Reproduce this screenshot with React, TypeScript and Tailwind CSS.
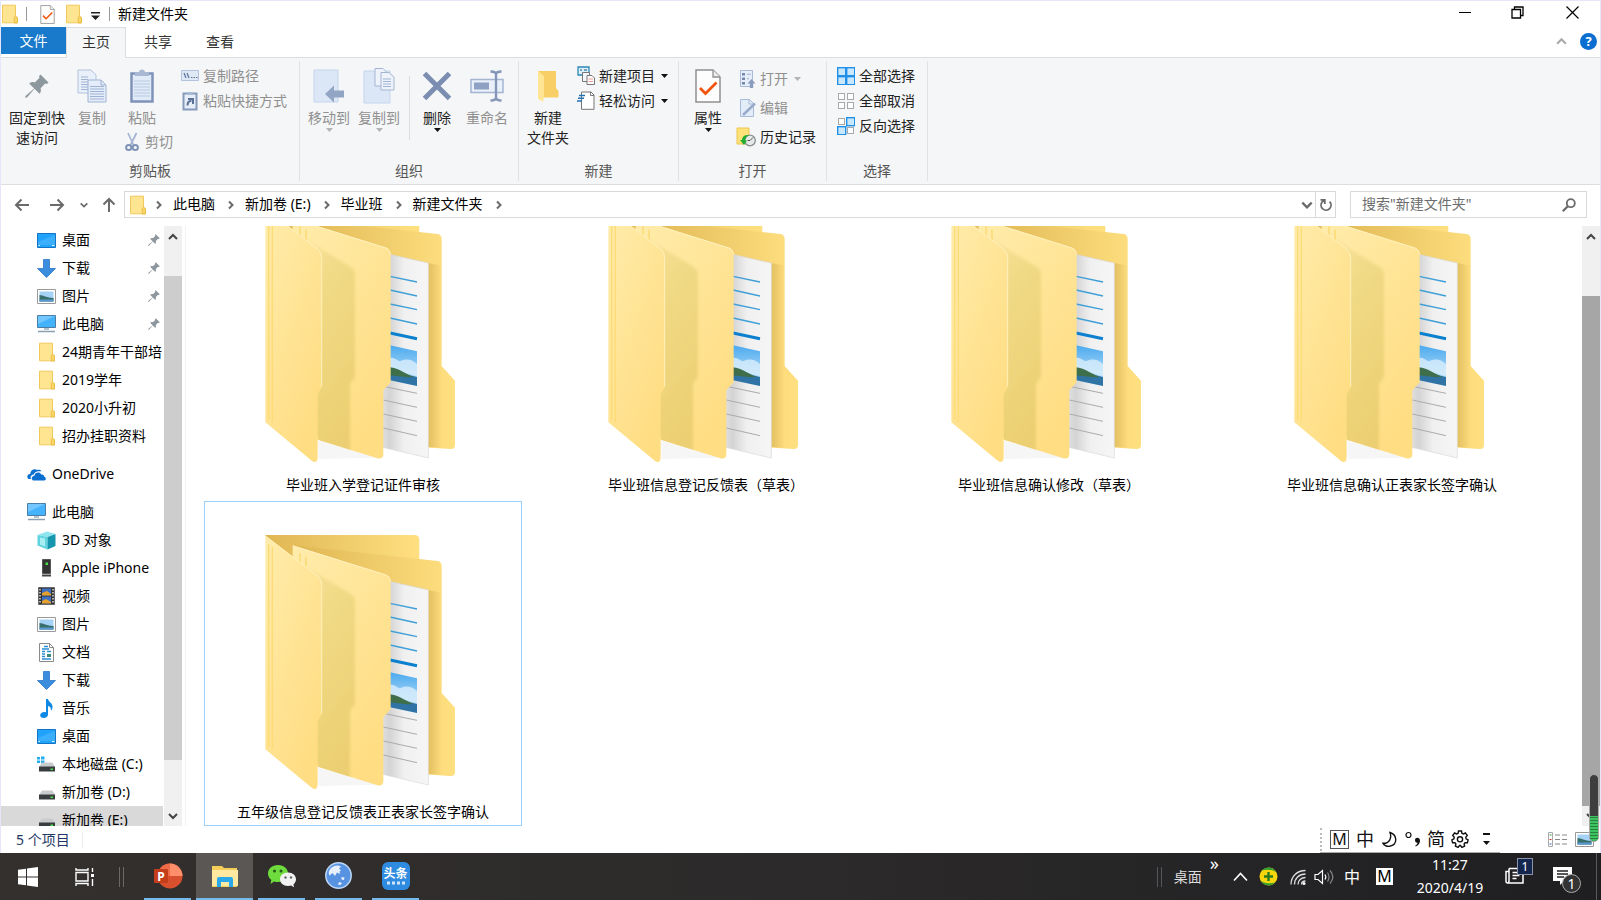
import React from 'react';

type IconProps = { className?: string };

/* ---------- shared icons ---------- */

const SmallFolder: React.FC<IconProps> = ({ className = 'w-4 h-5' }) => (
  <svg className={`shrink-0 ${className}`} viewBox="0 0 16 20">
    <path d="M.5 1.2h13v11.3l2 1.2v5.1H.5z" fill="#ffe592" stroke="#f0c95c" />
    <path d="M12.2 19v-5.6l1.3-1.2 2 1.5V19z" fill="#fbd667" stroke="#e9bd4b" />
  </svg>
);

const Pin: React.FC<IconProps> = ({ className = 'w-3 h-3' }) => (
  <svg className={`shrink-0 ${className}`} viewBox="0 0 24 24" fill="#8d979e">
    <path d="M15.5.5 23.5 8.5 21.8 10l-1.6-.5-4.6 4.7c.7 2 .3 4-1 5.6L9.5 14.8 2 23.5.3 23.7.5 22l8.7-7.5L4.2 9.4c1.600-1.300 3.600-1.700 5.600-1L14.500 3.800 14 2.200z" />
  </svg>
);

const Caret: React.FC<{ dim?: boolean }> = ({ dim }) => (
  <svg className="w-[7px] h-1 shrink-0" viewBox="0 0 7 4">
    <path d="M0 0h7L3.500 4z" fill={dim ? '#b4b4b4' : '#111'} />
  </svg>
);

const Chevron: React.FC<{ dir: 'up' | 'down' | 'right'; className?: string }> = ({ dir, className = 'w-3 h-3' }) => {
  const d = { up: 'M2 8l4-4 4 4', down: 'M2 4l4 4 4-4', right: 'M4 2.500L7.500 6 4 9.500' }[dir];
  return (
    <svg className={`shrink-0 ${className}`} viewBox="0 0 12 12" fill="none" stroke="currentColor" strokeWidth="2">
      <path d={d} />
    </svg>
  );
};

const CheckDoc: React.FC<IconProps> = ({ className = '' }) => (
  <svg className={`shrink-0 ${className}`} viewBox="0 0 26 34">
    <path d="M1 1h17l7 7v25H1z" fill="#fdfdfd" stroke="#909090" strokeWidth="1.500" />
    <path d="M18 1v7h7" fill="#eee" stroke="#909090" strokeWidth="1.300" />
    <path d="M5 19l5.500 5.500L21.500 13.500" fill="none" stroke="#f2540f" strokeWidth="2.800" />
  </svg>
);

/* ---------- ribbon icons ---------- */

const sheetLines = (x: number, y: number, w: number, n: number) =>
  Array.from({ length: n }, (_, i) => <path key={`${x}-${i}`} d={`M${x} ${y + i * 2.500}h${w}`} stroke="#9fb3d4" />);

const CopyIcon = () => (
  <svg className="w-[30px] h-[34px]" viewBox="0 0 30 34">
    <path d="M1 1h13l5 5v18H1z" fill="#e9f0fa" stroke="#b3c3de" />
    {sheetLines(4, 8, 7, 6)}
    <path d="M11 11h13l5 5v17H11z" fill="#e4edf9" stroke="#9fb3d4" />
    <path d="M24 11v5h5" fill="none" stroke="#9fb3d4" />
    {sheetLines(13, 17.500, 14, 6)}
  </svg>
);

const PasteIcon = () => (
  <svg className="w-6 h-[34px]" viewBox="0 0 24 34">
    <path d="M1.500 4.500h21v28h-21z" fill="#e1ebf8" stroke="#7f93b8" strokeWidth="2.500" />
    <path d="M5 3h4c0-3.500 6-3.500 6 0h4v4H5z" fill="#a9b9d4" />
    {[12, 15, 18, 21, 24, 27].map((y) => <path key={y} d={`M4 ${y}h16`} stroke="#b9c9e2" />)}
  </svg>
);

const CutIcon = () => (
  <svg className="w-[14px] h-5" viewBox="0 0 14 20" fill="none" stroke="#7f93b8">
    <path d="M3 1l5.500 12M11.500 1L5.500 13" stroke="#a4b4d0" strokeWidth="1.700" />
    <circle cx="3.700" cy="15.500" r="2.600" strokeWidth="2" />
    <circle cx="10.300" cy="15.500" r="2.600" strokeWidth="2" />
  </svg>
);

const CopyPathIcon = () => (
  <svg className="w-[18px] h-[11px]" viewBox="0 0 18 11">
    <path d="M.5.5h17v10H.5z" fill="#dfe9f6" stroke="#b3c3de" />
    <path d="M3 3l2 5M6 3l2 5M10 7.500h1.500M12.500 7.500H14M15 7.500h1.500" stroke="#5c7196" strokeWidth="1.200" />
  </svg>
);

const PasteLinkIcon = () => (
  <svg className="w-[18px] h-5" viewBox="0 0 18 20">
    <path d="M2.500 2.500h13v16h-13z" fill="#e6eef9" stroke="#8699bb" strokeWidth="2" />
    <path d="M6 1h6v3H6z" fill="#a9b9d4" />
    <path d="M6.500 14.500c0-3 1.500-4.500 4-4.700M7 8h5v5" fill="none" stroke="#5c7196" strokeWidth="2" />
  </svg>
);

const MoveToIcon = () => (
  <svg className="w-8 h-9" viewBox="0 0 32 36">
    <path d="M1 2h24v32H1z" fill="#dbe6f6" stroke="#c6d5ec" />
    <path d="M12 26l9-8.500v5h10v7H21v5z" fill="#93a5c4" />
  </svg>
);

const CopyToIcon = () => (
  <svg className="w-8 h-9" viewBox="0 0 32 36">
    <path d="M1 3h26v32H1z" fill="#dbe6f6" stroke="#c6d5ec" />
    <path d="M12 .5h8l4 4V18H12z" fill="#eef3fb" stroke="#a4b5d3" />
    <path d="M18 4.500h8l5 4.500v13H18z" fill="#eef3fb" stroke="#a4b5d3" />
    {sheetLines(20, 11, 8, 4)}
  </svg>
);

const DeleteIcon = () => (
  <svg className="w-[30px] h-[30px]" viewBox="0 0 30 30" stroke="#7b8db0" strokeWidth="5">
    <path d="M2.500 2.500l25 25M27.500 2.500l-25 25" />
  </svg>
);

const RenameIcon = () => (
  <svg className="w-[34px] h-8" viewBox="0 0 34 32" fill="none">
    <path d="M1 9.500h32v13H1z" fill="#e9f0fa" stroke="#a4b5d3" strokeWidth="1.500" />
    <path d="M4 12.500h15v7H4z" fill="#8fa1c2" />
    <path d="M20.500 1.500c3 0 5.500.5 5.500 3v23c0 2.500-2.500 3-5.500 3M31.500 1.500c-3 0-5.500.5-5.500 3v23c0 2.500 2.500 3 5.500 3" stroke="#8496b8" strokeWidth="2.400" />
  </svg>
);

const NewFolderIcon = () => (
  <svg className="w-[22px] h-8" viewBox="0 0 22 32">
    <path d="M1 1h18v17l2.500 3v6.500H6z" fill="#f7cf66" />
    <path d="M1 1l6 5v19l-1 7-5-3.500z" fill="#ffe594" />
  </svg>
);

const NewItemIcon = () => (
  <svg className="w-[18px] h-[19px]" viewBox="0 0 18 19" fill="none">
    <path d="M1 1h11v8H1z" fill="#d9effb" stroke="#2f86b5" strokeWidth="1.300" />
    <path d="M3 4h2M7 4h3" stroke="#155a80" />
    <path d="M5.500 6.500h7v9h-7z" fill="#f4f7fb" stroke="#777" />
    <path d="M10 9.500h5l2.500 2.500v6.500H10z" fill="#fff" stroke="#777" />
    <path d="M11.500 13h4.500M11.500 15.500h4.500" stroke="#ee9a94" />
  </svg>
);

const EasyAccessIcon = () => (
  <svg className="w-[18px] h-[19px]" viewBox="0 0 18 19" fill="none">
    <path d="M4.500 1h9.500l3 3v14.300H4.500z" fill="#fff" stroke="#777" />
    <path d="M13.500 1v3.500H17" stroke="#777" />
    <path d="M2 4.500h6M1 7.300h6M0 10h5" stroke="#2372b9" strokeWidth="1.600" />
  </svg>
);

const OpenIcon = () => (
  <svg className="w-[18px] h-5" viewBox="0 0 18 20">
    <path d="M2.500 1.500h12v16h-12z" fill="#e6eef9" stroke="#a9bad8" />
    <path d="M4 4h3v2.500H4zM4 8.500h3V11H4zM4 13h3v2.500H4z" fill="#7488ad" />
    <path d="M9 5.200h4M9 9.700h2" stroke="#9fb0cd" />
    <path d="M13.500 10l4 4.500h-2.300V19h-3.400v-4.500H9.500z" fill="#8b9dbe" />
  </svg>
);

const EditIcon = () => (
  <svg className="w-[18px] h-5" viewBox="0 0 18 20">
    <path d="M2.500 1.500h9l4 4v13h-13z" fill="#e3ecf9" stroke="#a9bad8" />
    <path d="M11 1.500V6h4.500" fill="none" stroke="#a9bad8" />
    <path d="M5 17L17 5.500" stroke="#9aacca" strokeWidth="2.600" />
  </svg>
);

const HistoryIcon = () => (
  <svg className="w-[20px] h-[20px] -ml-0.5" viewBox="0 0 20 20">
    <path d="M1 1h12v16H1z" fill="#ffe27a" stroke="#ecc653" />
    <circle cx="14" cy="13.500" r="5.300" fill="#e6e9ea" stroke="#8c8f92" strokeWidth="1.300" />
    <path d="M14 13.500l3-3M14 13.500h-2.500" stroke="#555" />
    <path d="M4 13l4 5 3-4.500H9.200c.3-3 1.600-4.500 4-5.300-4.200-.6-7 1-7.200 4.800z" fill="#1fae32" />
  </svg>
);

const Squares: React.FC<{ on: boolean[] }> = ({ on }) => (
  <svg className="w-[18px] h-[18px]" viewBox="0 0 18 18">
    {on.map((active, i) => {
      const x = i % 2 ? 10 : 1;
      const y = i > 1 ? 10 : 1;
      return active
        ? <rect key={i} x={x - 0.300} y={y - 0.300} width="8" height="8" fill="#c9e8fd" stroke="#2190e8" strokeWidth="1.400" />
        : <rect key={i} x={x + 0.500} y={y + 0.500} width="6" height="6" fill="#fff" stroke="#a9a9a9" />;
    })}
  </svg>
);

/* ---------- sidebar icons ---------- */

const DesktopIcon = () => (
  <svg className="w-[19px] h-[15px]" viewBox="0 0 19 15">
    <path d="M.5.5h18v14H.5z" fill="#21a3fb" stroke="#1274c4" />
    <path d="M1 9L18 2v10H1z" fill="#4cb7ff" opacity=".6" />
    <path d="M1.500 12.500h1.500M15 12.500h2.500" stroke="#e0f2ff" />
  </svg>
);

const DownloadIcon = () => (
  <svg className="w-[19px] h-[19px]" viewBox="0 0 19 19">
    <path d="M6.500.5h6v9h6L9.500 18.500.5 9.500h6z" fill="#3b8ede" stroke="#2a76c6" strokeWidth=".8" />
  </svg>
);

const PictureIcon = () => (
  <svg className="w-[19px] h-[15px]" viewBox="0 0 19 15">
    <path d="M.5.5h18v14H.5z" fill="#fff" stroke="#9a9a9a" />
    <path d="M2.500 2.500h14v10h-14z" fill="#a5d2f5" />
    <path d="M2.500 6c4 0 7 3 14 3v3.500h-14z" fill="#396f6a" />
    <path d="M2.500 10.500h14v2h-14z" fill="#5a9ad0" />
  </svg>
);

const PcIcon = () => (
  <svg className="w-[19px] h-[18px]" viewBox="0 0 19 18">
    <path d="M.5.5h18v12H.5z" fill="#45b2fc" stroke="#4a7ea5" />
    <path d="M1 1h17L1 9z" fill="#86d0ff" opacity=".7" />
    <path d="M7 13h5v2H7z" fill="#b7c3cc" />
    <path d="M1 16.500h17" stroke="#8aa0b0" strokeWidth="1.500" />
  </svg>
);

const CloudIcon = () => (
  <svg className="w-[19px] h-[13px]" viewBox="0 0 19 13" fill="#0b6fd0">
    <path d="M1.500 11C-.6 9.500.2 6 3.200 6 3.400 2.500 7 .2 10.200 2c1-.5 3-.6 4.300 1.300C9 2.500 7 5 6.800 6.500 4 6.500 3 9 4 11z" />
    <path d="M6.500 12.500c-2.600-.8-2.300-4.500.9-4.800C8 4 12.800 3.300 14.300 6.500c2-.2 3 1 3 2.300 2 .5 2 3.200 0 3.700z" />
  </svg>
);

const CubeIcon = () => (
  <svg className="w-[19px] h-[19px]" viewBox="0 0 19 19">
    <path d="M.5 4L10 .5l8.500 2.500-8 3z" fill="#8fe6ee" />
    <path d="M.5 4l10 2v12.500L.5 14.500z" fill="#5fd3df" />
    <path d="M10.500 6l8-3v12l-8 3.500z" fill="#1697ae" />
    <path d="M3 6.500l5 1v8l-5-2z" fill="#a9eef3" />
  </svg>
);

const PhoneIcon = () => (
  <svg className="w-[19px] h-[18px]" viewBox="0 0 19 18">
    <path d="M5.500.5h8v14h-8z" fill="#333" stroke="#555" />
    <path d="M8.500 3.500h2.500V6H8.500z" fill="#4ae04a" />
    <path d="M5 16.500h9" stroke="#444" strokeWidth="2" />
  </svg>
);

const VideoIcon = () => (
  <svg className="w-[19px] h-[18px]" viewBox="0 0 19 18">
    <path d="M1.500.5h16v17h-16z" fill="#333" stroke="#666" />
    <path d="M5 1.500h9v7H5zM5 9.500h9v7H5z" fill="#3d6fc2" />
    <path d="M5 6l5-2 4 3v1.500H5zM5 14l4-2 5 3v1.500H5z" fill="#e5a02c" />
    <path d="M3 2v15M16 2v15" stroke="#ddd" strokeWidth="1.500" strokeDasharray="1.500 1.500" />
  </svg>
);

const DocumentIcon = () => (
  <svg className="w-[19px] h-[19px]" viewBox="0 0 19 19" fill="none">
    <path d="M2.500.5h10l4 4v14h-14z" fill="#fff" stroke="#8a8a8a" />
    <path d="M12.500.5v4h4" stroke="#8a8a8a" />
    <path d="M7 3.500h4M5 6h7M5 8.500h3M10 8.500h4M5 11h3M5 13.500h3M5 16h9" stroke="#2b8fd6" strokeWidth="1.300" />
    <path d="M10 11h4v3h-4z" fill="#3b8a77" />
  </svg>
);

const MusicIcon = () => (
  <svg className="w-[19px] h-[19px]" viewBox="0 0 19 19">
    <path d="M9 0h2c.4 3 5 4 4.500 8.500-.2 1.500-.8 2.500-1.500 3.200C14.300 9 13 7.500 11 7v8.500c0 2-2 3.500-4.300 3.500C4.500 19 3 17.800 3.200 16c.3-2.300 3.300-3.700 5.800-2.800z" fill="#1089e4" />
  </svg>
);

const DriveIcon: React.FC<{ system?: boolean }> = ({ system }) => (
  <svg className="w-[19px] h-[16px]" viewBox="0 0 19 16">
    {system && <path d="M0 1h3v2.500H0zM4 .5h3.500v3H4zM0 4.500h3V7H0zM4 4.500h3.500v3H4z" fill="#22aef0" />}
    <path d="M5 6.500h10.500L18 11H2z" fill="#c9cccd" />
    <path d="M2 10.500h16v5H2z" fill="#3a3d3f" />
    <path d="M13.500 12.500H16v1.500h-2.500z" fill="#45e04a" />
  </svg>
);

/* Open folder with a document inside, drawn at 256px */
const LargeFolder: React.FC<{ id: string }> = ({ id }) => (
  <svg className="w-64 h-64" viewBox="135 132 768 768">
    <defs>
      <linearGradient id={`${id}back`}><stop offset="0" stopColor="#dfb652" /><stop offset="1" stopColor="#ffe081" /></linearGradient>
      <linearGradient id={`${id}front`} x2=".6" y2="1"><stop offset="0" stopColor="#ffecab" /><stop offset="1" stopColor="#ffdd83" /></linearGradient>
      <linearGradient id={`${id}shade`} x2=".3" y2="1"><stop offset="0" stopColor="#f8e39c" /><stop offset=".3" stopColor="#f1da86" /><stop offset="1" stopColor="#eccf72" /></linearGradient>
      <linearGradient id={`${id}paper`}><stop offset="0" stopColor="#e2e2e2" /><stop offset=".2" stopColor="#d4d4d4" /><stop offset=".5" stopColor="#f0f0f0" /><stop offset="1" stopColor="#f6f6f6" /></linearGradient>
      <linearGradient id={`${id}edge`}><stop offset="0" stopColor="#d0ac4e" stopOpacity=".55" /><stop offset="1" stopColor="#d0ac4e" stopOpacity="0" /></linearGradient>
      <linearGradient id={`${id}sky`} x2="0" y2="1"><stop offset="0" stopColor="#4ba9ee" /><stop offset="1" stopColor="#d5edfc" /></linearGradient>
      <filter id={`${id}soft`}><feGaussianBlur stdDeviation="5" /></filter>
      <clipPath id={`${id}clip`}><path d="M308 166l280 88q14 6 14 20v384l-22 24v190q0 18-18 14l-178-56-76-200z" /></clipPath>
    </defs>
    <path d="M384 832l180 52-178 4z" fill="#f6f6f6" />
    <path d="M226 135h448q14 0 14 16v300H320z" fill={`url(#${id}back)`} />
    <path d="M308 166l435 47q12 2 12 16v380l40 44v194q0 12-14 11l-180-12z" fill={`url(#${id}back)`} />
    <path d="M715 300l40 8v546l-40-2z" fill={`url(#${id}edge)`} />
    <path d="M570 268l145 32v585l-145-34z" fill={`url(#${id}paper)`} stroke="#dadada" strokeWidth="2" />
    <g fill="none" stroke="#3f9fd8" strokeWidth="4">
      <path d="M600 340l81 17M600 381l81 18M600 423l81 17M600 465l81 18" />
      <path d="M600 510l81 17" stroke="#0a80cf" strokeWidth="9" />
      <path d="M580 670l101 21M580 711l101 22M580 753l101 22M580 795l101 23" stroke="#ababab" strokeWidth="3" />
    </g>
    <path d="M600 547l81 18v104l-81-17z" fill={`url(#${id}sky)`} />
    <path d="M600 585c12-4 20 8 30 10 16-8 34-8 51 8v36l-81-22z" fill="#d9eefb" opacity=".8" />
    <path d="M600 622c20 2 50 14 81 20v27l-81-17z" fill="#2f74a5" />
    <path d="M600 613c25 2 40 16 70 29l-20 1-50-6z" fill="#3f6f4a" />
    <path d="M308 166l280 88q14 6 14 20v384l-22 24v190q0 18-18 14l-178-56-76-200z" fill={`url(#${id}front)`} />
    <g clipPath={`url(#${id}clip)`}>
      <path d="M340 225l138 85q17 8 17 24v308l-15 20v240H340z" fill={`url(#${id}shade)`} filter={`url(#${id}soft)`} />
    </g>
    <path d="M330 190v60M348 200v40" stroke="#fbd970" strokeWidth="4" />
    <path d="M226 137l158 121q12 12 12 26v388l-13 22v188q0 20-16 13L226 778z" fill={`url(#${id}front)`} />
    <path d="M310 168l278 87q13 5 13 20M228 139l156 120q11 10 11 24v388" fill="none" stroke="#fff1bd" strokeWidth="3" />
    <path d="M236 162v608M247 170v608" stroke="#fddc78" strokeWidth="4" />
  </svg>
);

/* ---------- ribbon pieces ---------- */

const BigButton: React.FC<{ icon: React.ReactNode; label: string; second?: string; dim?: boolean; caret?: boolean; wide?: boolean }> = ({ icon, label, second, dim, caret, wide }) => (
  <button disabled={dim} className={`flex flex-col items-center pt-[5px] shrink-0 ${wide ? 'w-[60px]' : 'w-[50px]'} ${dim ? 'text-[#909090]' : 'text-[#222]'}`}>
    <span className="h-10 mb-0.5 flex items-center">{icon}</span>
    <span className="whitespace-nowrap">{label}</span>
    {second && <span className="whitespace-nowrap">{second}</span>}
    {caret && <Caret dim={dim} />}
  </button>
);

const SmallButton: React.FC<{ icon: React.ReactNode; label: string; dim?: boolean; caret?: boolean; tall?: boolean }> = ({ icon, label, dim, caret, tall }) => (
  <button disabled={dim} className={`flex items-center gap-1 whitespace-nowrap ${tall ? 'h-[29px]' : 'h-[25px]'} ${dim ? 'text-[#909090]' : 'text-[#222]'}`}>
    <span className="w-[18px] shrink-0 flex justify-center">{icon}</span>
    <span>{label}</span>
    {caret && <span className="ml-0.5"><Caret dim={dim} /></span>}
  </button>
);

const Group: React.FC<{ label: string; className?: string; children: React.ReactNode }> = ({ label, className = '', children }) => (
  <section aria-label={label} className="flex flex-col justify-between border-r border-[#e0e2e4] shrink-0">
    <div className={`flex items-start ${className}`}>{children}</div>
    <div className="text-center text-[#555]">{label}</div>
  </section>
);

const Ribbon: React.FC = () => (
  <div className="flex h-[127px] py-[3px] bg-[#f5f6f7] border-b border-[#dcdddf] shrink-0">
    <Group label="剪贴板" className="pl-1.5 pr-3">
      <BigButton wide icon={<Pin className="w-6 h-6" />} label="固定到快" second="速访问" />
      <BigButton dim icon={<CopyIcon />} label="复制" />
      <div className="w-[60px]">
        <BigButton dim icon={<PasteIcon />} label="粘贴" />
        <button disabled className="flex items-center gap-1.5 mt-1 ml-2 text-[#909090]"><CutIcon />剪切</button>
      </div>
      <div className="pt-0.5 pl-1">
        <SmallButton dim icon={<CopyPathIcon />} label="复制路径" />
        <SmallButton dim icon={<PasteLinkIcon />} label="粘贴快捷方式" />
      </div>
    </Group>
    <Group label="组织" className="pl-1 pr-1.5">
      <BigButton dim caret icon={<MoveToIcon />} label="移动到" />
      <BigButton dim caret icon={<CopyToIcon />} label="复制到" />
      <div className="w-px h-16 mt-[15px] ml-[5px] mr-0.5 bg-[#dcdee0]" />
      <BigButton caret icon={<DeleteIcon />} label="删除" />
      <BigButton dim icon={<RenameIcon />} label="重命名" />
    </Group>
    <Group label="新建" className="pl-1 pr-2.5">
      <BigButton icon={<NewFolderIcon />} label="新建" second="文件夹" />
      <div className="pt-0.5 pl-1">
        <SmallButton caret icon={<NewItemIcon />} label="新建项目" />
        <SmallButton caret icon={<EasyAccessIcon />} label="轻松访问" />
      </div>
    </Group>
    <Group label="打开" className="pl-1 pr-2.5">
      <BigButton caret icon={<CheckDoc className="w-[26px] h-[34px]" />} label="属性" />
      <div className="pt-[3px] pl-[5px]">
        <SmallButton tall dim caret icon={<OpenIcon />} label="打开" />
        <SmallButton tall dim icon={<EditIcon />} label="编辑" />
        <SmallButton tall icon={<HistoryIcon />} label="历史记录" />
      </div>
    </Group>
    <Group label="选择" className="pl-2.5 pr-3">
      <div className="pt-0.5">
        <SmallButton icon={<Squares on={[true, true, true, true]} />} label="全部选择" />
        <SmallButton icon={<Squares on={[false, false, false, false]} />} label="全部取消" />
        <SmallButton icon={<Squares on={[false, true, true, false]} />} label="反向选择" />
      </div>
    </Group>
  </div>
);

/* ---------- window chrome ---------- */

const TitleBar: React.FC = () => (
  <header className="flex items-center h-[26px] shrink-0">
    <SmallFolder className="w-4 h-5 ml-px" />
    <div className="w-px h-3.5 bg-[#999] ml-2 mr-[13px]" />
    <button aria-label="属性"><CheckDoc className="w-[15px] h-[19px]" /></button>
    <button aria-label="新建文件夹" className="ml-[11px]"><SmallFolder className="w-4 h-5" /></button>
    <button aria-label="自定义快速访问工具栏" className="ml-[9px] mt-1">
      <svg className="w-[9px] h-2" viewBox="0 0 9 8"><path d="M0 0h9v1.500H0zM0 3.500h9L4.500 8z" fill="#222" /></svg>
    </button>
    <div className="w-px h-3.5 bg-[#999] ml-[9px] mr-2" />
    <h1 className="text-black pb-px">新建文件夹</h1>
    <div className="ml-auto pb-1 flex items-center">
      <button aria-label="最小化" className="w-[53px] h-5 flex items-center justify-center">
        <svg className="w-3 h-3" viewBox="0 0 12 12"><path d="M0 6.500h12" stroke="#000" /></svg>
      </button>
      <button aria-label="还原" className="w-[53px] h-5 flex items-center justify-center">
        <svg className="w-[13px] h-[13px]" viewBox="0 0 13 13" fill="none" stroke="#000" strokeWidth="1.300"><path d="M1 3.500h8.500V12H1zM3.500 3.500V1H12v8.500H9.500" /></svg>
      </button>
      <button aria-label="关闭" className="w-14 h-5 flex items-center justify-center">
        <svg className="w-[13px] h-[13px]" viewBox="0 0 13 13" stroke="#000" strokeWidth="1.200"><path d="M.5.5l12 12M12.500.5l-12 12" /></svg>
      </button>
    </div>
  </header>
);

const TabRow: React.FC = () => (
  <nav className="flex items-start h-[31px] shrink-0 border-b border-[#dcdddf] text-[#333]">
    <button className="w-[65px] h-[27px] bg-[#1979ca] text-white">文件</button>
    <button className="w-[60px] h-[31px] pb-0.5 bg-[#f5f6f7] border border-b-0 border-[#dcdddf]">主页</button>
    <button className="w-16 h-[29px]">共享</button>
    <button className="w-[60px] h-[29px]">查看</button>
    <div className="ml-auto flex items-center h-[29px] gap-3 pr-[3px]">
      <button aria-label="最小化功能区" className="text-[#aaa]"><Chevron dir="up" className="w-[13px] h-[13px]" /></button>
      <button aria-label="帮助" className="w-[17px] h-[17px] rounded-full bg-[#0a6fd0] text-white text-[13px] leading-[17px] font-bold">?</button>
    </div>
  </nav>
);

const crumbs = ['此电脑', '新加卷 (E:)', '毕业班', '新建文件夹'];

const AddressBar: React.FC = () => (
  <div className="flex items-center h-[41px] shrink-0 pl-[13px] pr-[13px] pb-0.5 text-[#6a6a6a]">
    <button aria-label="后退">
      <svg className="w-4 h-4" viewBox="0 0 16 16" fill="none" stroke="currentColor" strokeWidth="2"><path d="M15 8H2M7.500 2.500L2 8l5.500 5.500" /></svg>
    </button>
    <button aria-label="前进" className="ml-[19px]">
      <svg className="w-4 h-4" viewBox="0 0 16 16" fill="none" stroke="currentColor" strokeWidth="2"><path d="M1 8h13M8.500 2.500L14 8l-5.500 5.500" /></svg>
    </button>
    <button aria-label="最近浏览的位置" className="ml-3.5"><Chevron dir="down" className="w-2.5 h-2.5" /></button>
    <button aria-label="上移" className="ml-3">
      <svg className="w-4 h-4" viewBox="0 0 16 16" fill="none" stroke="currentColor" strokeWidth="2"><path d="M8 15V2M2.500 7.500L8 2l5.500 5.500" /></svg>
    </button>
    <div className="ml-[7px] flex-1 flex items-center h-[27px] border border-[#d9d9d9]">
      <SmallFolder className="w-4 h-5 ml-[5px] mr-[7px]" />
      <Chevron dir="right" />
      {crumbs.map((c) => (
        <React.Fragment key={c}>
          <a href="#" className="text-black ml-2 mr-2.5 pb-0.5 whitespace-nowrap">{c}</a>
          <Chevron dir="right" />
        </React.Fragment>
      ))}
      <button aria-label="上一个位置" className="ml-auto mr-px"><Chevron dir="down" className="w-3.5 h-3.5" /></button>
      <button aria-label="刷新" className="h-full w-5 flex items-center justify-center border-l border-[#d9d9d9]">
        <svg className="w-3.5 h-3.5" viewBox="0 0 14 14" fill="none" stroke="currentColor" strokeWidth="1.800"><path d="M1.500 1.800h4.300v4.200M10.600 3.600a5 5 0 1 1-7.400.3L5.500 2" /></svg>
      </button>
    </div>
    <label className="ml-3.5 w-[237px] h-[27px] flex items-center border border-[#d9d9d9] pl-[11px] pr-2.5">
      <input type="search" aria-label="搜索" placeholder='搜索"新建文件夹"' className="flex-1 min-w-0 pb-px outline-none placeholder:text-[#6d6d6d] placeholder:opacity-100" />
      <svg className="w-3.5 h-3.5" viewBox="0 0 14 14" fill="none" stroke="currentColor" strokeWidth="1.800"><circle cx="8.800" cy="5.200" r="4" /><path d="M6 8L.8 13.200" strokeWidth="2.200" /></svg>
    </label>
  </div>
);

/* ---------- body ---------- */

type NavItem = { label: string; icon: React.ReactNode; top?: boolean; pinned?: boolean; active?: boolean };

const navItems: NavItem[] = [
  { label: '桌面', icon: <DesktopIcon />, pinned: true },
  { label: '下载', icon: <DownloadIcon />, pinned: true },
  { label: '图片', icon: <PictureIcon />, pinned: true },
  { label: '此电脑', icon: <PcIcon />, pinned: true },
  { label: '24期青年干部培', icon: <SmallFolder /> },
  { label: '2019学年', icon: <SmallFolder /> },
  { label: '2020小升初', icon: <SmallFolder /> },
  { label: '招办挂职资料', icon: <SmallFolder /> },
  { label: 'OneDrive', icon: <CloudIcon />, top: true },
  { label: '此电脑', icon: <PcIcon />, top: true },
  { label: '3D 对象', icon: <CubeIcon /> },
  { label: 'Apple iPhone', icon: <PhoneIcon /> },
  { label: '视频', icon: <VideoIcon /> },
  { label: '图片', icon: <PictureIcon /> },
  { label: '文档', icon: <DocumentIcon /> },
  { label: '下载', icon: <DownloadIcon /> },
  { label: '音乐', icon: <MusicIcon /> },
  { label: '桌面', icon: <DesktopIcon /> },
  { label: '本地磁盘 (C:)', icon: <DriveIcon system /> },
  { label: '新加卷 (D:)', icon: <DriveIcon /> },
  { label: '新加卷 (E:)', icon: <DriveIcon />, active: true },
];

const Sidebar: React.FC = () => (
  <aside className="flex shrink-0 border-r border-[#f2f2f2]">
    <nav className="w-[162px] overflow-hidden text-black">
      {navItems.map((item, i) => (
        <a
          key={i}
          href="#"
          className={`flex items-center h-7 gap-1.5 whitespace-nowrap ${item.top ? 'mt-2.5 pl-[26px]' : 'pl-9'} ${item.active ? 'bg-[#d9d9d9]' : ''}`}
        >
          <span className="w-[19px] shrink-0 flex justify-center">{item.icon}</span>
          <span>{item.label}</span>
          {item.pinned && <Pin className="w-3 h-3 ml-auto mr-[3px]" />}
        </a>
      ))}
    </nav>
    <div className="w-[18px] ml-px mr-[3px] flex flex-col bg-[#f0f0f0] text-[#444]">
      <button aria-label="向上滚动" className="h-[22px] flex items-center justify-center"><Chevron dir="up" /></button>
      <div className="flex-1 pt-7 pb-[45px]"><div className="h-full bg-[#cdcdcd]" /></div>
      <button aria-label="向下滚动" className="h-[21px] flex items-center justify-center"><Chevron dir="down" /></button>
    </div>
  </aside>
);

const folders = [
  '毕业班入学登记证件审核',
  '毕业班信息登记反馈表（草表）',
  '毕业班信息确认修改（草表）',
  '毕业班信息确认正表家长签字确认',
  '五年级信息登记反馈表正表家长签字确认',
];

const FolderGrid: React.FC = () => (
  <main className="flex-1 overflow-hidden grid grid-cols-[repeat(auto-fill,318px)] content-end gap-x-[25px] gap-y-0.5 pl-[18px]">
    {folders.map((name, i) => (
      <a
        key={name}
        href="#"
        className={`h-[325px] flex flex-col items-center pt-8 border text-black ${i === folders.length - 1 ? 'border-[#99d1ff]' : 'border-transparent'}`}
      >
        <LargeFolder id={`f${i}`} />
        <span className="mt-3">{name}</span>
      </a>
    ))}
  </main>
);

const MainScrollbar: React.FC = () => (
  <div className="w-[18px] shrink-0 flex flex-col bg-[#f0f0f0] text-[#444]">
    <button aria-label="向上滚动" className="h-[22px] flex items-center justify-center"><Chevron dir="up" /></button>
    <div className="flex-1 pt-12"><div className="h-full bg-[#a6a6a6]" /></div>
    <button aria-label="向下滚动" className="h-5 flex items-center justify-center"><Chevron dir="down" /></button>
  </div>
);

const Gear: React.FC = () => (
  <svg className="w-[18px] h-[18px]" viewBox="0 0 18 18" fill="none" stroke="#111" strokeWidth="1.400">
    <path d="M7.500 1h3l.4 2.200 1.500.8 2-1 1.900 2.400-1.500 1.700.3 1.700 2 1-.7 2.900-2.300 0-1 1.300.5 2.200-2.700 1.200L9.500 15.500h-1l-1.400 1.900-2.700-1.200.5-2.200-1-1.300-2.300 0-.7-2.900 2-1 .3-1.700L1.700 5.400 3.600 3l2 1 1.500-.8z" />
    <circle cx="9" cy="9.300" r="2.600" />
  </svg>
);

const StatusBar: React.FC = () => (
  <footer className="flex items-center h-[27px] shrink-0 pl-[15px] text-[#1f3864]">
    <span>5 个项目</span>
    <div className="w-px h-4 ml-3 bg-[#ececec]" />
    {/* input method toolbar */}
    <div className="ml-auto h-full flex items-center text-[#111] text-lg leading-5 border-b border-[#aaa]">
      <div className="h-[23px] border-l-2 border-dotted border-[#bbb] mr-2" />
      <button className="w-[19px] h-[19px] border border-[#555] leading-[17px] text-base">M</button>
      <button className="ml-[7px]">中</button>
      <button aria-label="半角" className="ml-2">
        <svg className="w-[15px] h-[17px]" viewBox="0 0 15 17" fill="none" stroke="#111" strokeWidth="1.400"><path d="M8 1.500c7.500 2.500 8 12.500-.5 13.800-2.800.3-5-.8-6.500-3C7.500 12.500 10 7 8 1.500z" /></svg>
      </button>
      <button aria-label="中文标点" className="ml-2">
        <svg className="w-4 h-4" viewBox="0 0 16 16"><circle cx="3.500" cy="4" r="2.500" fill="none" stroke="#111" strokeWidth="1.200" /><path d="M10 9c0-3.500 5.500-3 5 1-.3 3-2 4.500-4.500 5.500l-.3-.8c1.600-.9 2.200-1.900 2.300-3C11 12 10 10.500 10 9z" fill="#111" /></svg>
      </button>
      <button className="ml-1.5">简</button>
      <button aria-label="设置" className="ml-1.5"><Gear /></button>
      <button aria-label="选项" className="ml-3.5 mr-2.5">
        <svg className="w-[7px] h-3" viewBox="0 0 7 12"><path d="M0 0h7v2H0zM0 8h7l-3.500 4z" fill="#111" /></svg>
      </button>
    </div>
    <button aria-label="详细信息" className="ml-12">
      <svg className="w-[19px] h-[15px]" viewBox="0 0 19 15" fill="none" stroke="#888"><path d="M.5.5h4v14h-4z" stroke="#aaa" /><path d="M7 3h5M14 3h5M7 7.500h5M14 7.500h5M7 12h5M14 12h5" /><path d="M1.500 3h2" stroke="#3a9a3a" /><path d="M1.500 7.500h2" stroke="#c33" /><path d="M1.500 12h2" stroke="#36c" /></svg>
    </button>
    <button aria-label="大缩略图" className="ml-2 mr-1.5"><PictureIcon /></button>
  </footer>
);

/* ---------- taskbar ---------- */

const TaskSlot: React.FC<{ name: string; active?: boolean; children: React.ReactNode }> = ({ name, active, children }) => (
  <button aria-label={name} className={`w-[57px] h-full flex flex-col items-center ${active ? 'bg-[#5b5755]' : ''}`}>
    <span className="flex-1 flex items-center">{children}</span>
    <span className={`h-0.5 bg-[#76b9ed] ${active ? 'w-full' : 'w-[47px]'}`} />
  </button>
);

const Taskbar: React.FC = () => (
  <footer className="flex items-center h-[47px] shrink-0 bg-linear-to-r from-[#33302e] via-[#2c2a2a] to-[#1f1f22] text-white">
    <button aria-label="开始" className="w-14 flex justify-center">
      <svg className="w-5 h-5" viewBox="0 0 20 20" fill="#fff"><path d="M0 2.800l8-1.100v7.800H0zM9 1.500L20 0v9.500H9zM0 10.500h8v7.800l-8-1.100zM9 10.500h11V20L9 18.500z" /></svg>
    </button>
    <button aria-label="任务视图" className="w-[57px] flex justify-center">
      <svg className="w-5 h-5" viewBox="0 0 20 20" fill="none" stroke="#fff" strokeWidth="1.400"><path d="M1 5.500h12v8.500H1zM1 1v2h12V1M1 19v-2.500h12V19M17.500 1v4M17.500 12v7" /><path d="M16 7h3v3h-3z" fill="#fff" stroke="none" /></svg>
    </button>
    <div className="w-[5px] h-5 ml-1.5 mr-[15px] border-x border-[#6b6866]" />
    <TaskSlot name="PowerPoint">
      <svg className="w-[30px] h-[26px]" viewBox="0 0 30 26">
        <circle cx="17" cy="13" r="12.500" fill="#d9502f" />
        <path d="M17 .5A12.500 12.500 0 0 1 29.500 13H17z" fill="#ff8f6b" />
        <path d="M17 .5A12.500 12.500 0 0 0 4.500 13H17z" fill="#ee6c47" />
        <rect x="1" y="6" width="14" height="14" rx="1" fill="#c43e1c" />
        <text x="8" y="17.500" textAnchor="middle" fontSize="12" fontWeight="700" fill="#fff">P</text>
      </svg>
    </TaskSlot>
    <TaskSlot name="文件资源管理器" active>
      <svg className="w-[26px] h-[22px]" viewBox="0 0 26 22">
        <path d="M0 1h10l2 2h13v19H0z" fill="#f6cf5b" />
        <path d="M0 5h26v16H0z" fill="#ffe9a0" />
        <path d="M5 22v-8q0-2 2-2h12q2 0 2 2v8h-4v-5H9v5z" fill="#29a9ea" />
      </svg>
    </TaskSlot>
    <TaskSlot name="微信">
      <svg className="w-[30px] h-6" viewBox="0 0 30 24">
        <path d="M11 1c6 0 10 4 10 8.500S17 18 11 18c-1.500 0-3-.2-4-.6L3.500 20l.8-4C2 14.300 1 12 1 9.500 1 5 5 1 11 1z" fill="#6fdc3d" />
        <path d="M21 8.500c4.800 0 8 3.200 8 6.700 0 2-1 3.800-2.500 5l.5 3-2.800-1.800c-1 .3-2 .5-3.200.5-4.800 0-8-3.200-8-6.700s3.200-6.700 8-6.700z" fill="#f2f2f2" />
        <g fill="#27591a"><circle cx="7.500" cy="7" r="1.500" /><circle cx="14" cy="7" r="1.500" /></g>
        <g fill="#666"><circle cx="18.500" cy="13.500" r="1.200" /><circle cx="24" cy="13.500" r="1.200" /></g>
      </svg>
    </TaskSlot>
    <TaskSlot name="浏览器">
      <svg className="w-[27px] h-[27px]" viewBox="0 0 27 27">
        <circle cx="13.500" cy="13.500" r="12.700" fill="#5793e0" stroke="#bcd6f5" strokeWidth="1.500" />
        <path d="M4.500 8C7 4 12 2.500 16 4.500l-2 2 2 2-1.500 1 .5 2.500-3-1.500-2 3.500-2.500-3-3 2.500C3.500 12 3.500 10 4.500 8zM16.500 15l3 .5-.5 2.500-2.500-.5zM14 20l3 1-1.500 2-2.500-.5z" fill="#e6f1fd" />
      </svg>
    </TaskSlot>
    <TaskSlot name="头条">
      <span className="w-7 h-7 rounded-md bg-[#2e8be0] flex flex-col items-center justify-center text-xs leading-[14px] font-bold">
        头条
        <svg className="w-5 h-1" viewBox="0 0 20 4"><path d="M1 2h3M6 2h3M11 2h3M16 2h3" stroke="#cfe5fb" strokeWidth="3" /></svg>
      </span>
    </TaskSlot>

    <div className="ml-auto flex items-center h-full">
      <div className="w-[5px] h-5 border-x border-[#55565a]" />
      <span className="ml-3 text-[#ddd]">桌面</span>
      <button className="ml-2 mb-7 text-lg leading-4">»</button>
      <button aria-label="显示隐藏的图标" className="ml-3.5">
        <svg className="w-[15px] h-2.5" viewBox="0 0 15 10" fill="none" stroke="#fff" strokeWidth="1.600"><path d="M1 8.500l6.500-7 6.500 7" /></svg>
      </button>
      <svg className="w-[19px] h-[19px] ml-[11px]" viewBox="0 0 19 19">
        <circle cx="9.500" cy="9.500" r="9" fill="#f5d60c" />
        <path d="M3 3.500C7-.8 14-.3 17 5c-4-2.500-9-3-14-1.500zM16 15.500c-4 4.300-11 3.800-14-1.500 4 2.500 9 3 14 1.500z" fill="#2e9e33" />
        <path d="M9.500 5v9M5 9.500h9" stroke="#2c7a1f" strokeWidth="2.400" />
      </svg>
      <svg className="w-4 h-4 ml-3" viewBox="0 0 16 16" fill="none" stroke="#ddd" strokeWidth="1.300">
        <path d="M1 15.500C1 7.500 7 1.500 15.500 1.500M4.500 15.500c0-6 4.500-10.500 11-10.500M8 15.500c0-4 3-7 7.500-7M11.500 15.500c0-2 1.500-3.500 4-3.500" /><circle cx="14" cy="14.500" r="1.500" fill="#fff" stroke="none" />
      </svg>
      <svg className="w-5 h-4 ml-2" viewBox="0 0 20 16" fill="none" stroke="#fff" strokeWidth="1.200">
        <path d="M1 5.500h3L8.500 1.500v13L4 10.500H1z" /><path d="M11 5.500c1 1.500 1 3.500 0 5" /><path d="M13.500 3.500c2 2.500 2 6.500 0 9M16 1.500c3.500 4 3.500 9 0 13" stroke="#888" />
      </svg>
      <span className="ml-2.5 text-base">中</span>
      <span className="ml-4 w-[17px] h-[17px] bg-white text-black text-base leading-[17px] text-center">M</span>
      <time className="ml-[18px] w-[78px] text-center leading-[23px] pb-0.5">
        11:27<br />2020/4/19
      </time>
      <button aria-label="资讯" className="ml-4 mr-0.5 mb-1.5 relative">
        <svg className="w-7 h-7" viewBox="0 0 28 28" fill="none" stroke="#fff" strokeWidth="1.500"><path d="M4 8.500h14v14.500H2.500q-1.500 0-1.500-2v-9.500h3M4 8.500v12q0 2.500-1.500 2.500M7.500 12.500h7M7.500 15.500h7M7.500 18.500h4" /></svg>
        <span className="absolute -top-0.5 right-0 w-4 h-[17px] border border-[#8a93a8] bg-[#14264d] text-xs leading-[15px] text-center">1</span>
      </button>
      <button aria-label="通知" className="ml-[18px] mb-1 relative w-7 h-7">
        <svg className="w-5 h-5 mt-0.5" viewBox="0 0 20 20"><path d="M0 1h19v14h-8l-4 4v-4H0z" fill="#fff" /><path d="M4 5h11M4 8h11M4 11h7" stroke="#222" strokeWidth="1.300" /></svg>
        <span className="absolute -bottom-1 right-0 w-[19px] h-[19px] rounded-full border border-[#aaa] bg-[#333] text-sm leading-[17px] text-center">1</span>
      </button>
      <div className="w-px h-full ml-[15px] mr-1 bg-[#5a5a5e]" />
    </div>
  </footer>
);

const Battery: React.FC = () => (
  <div className="absolute right-[2px] bottom-[58px] w-[10px] h-[68px] rounded-full border border-[#aaa] bg-[#3e3e3e] overflow-hidden flex flex-col justify-end">
    <div className="h-[25px] bg-[repeating-linear-gradient(0deg,#3cc460_0px,#3cc460_2px,#2b7f41_2px,#2b7f41_3px)]" />
  </div>
);

const App: React.FC = () => (
  <div className="relative h-screen flex flex-col overflow-hidden bg-white text-sm leading-5 font-['Noto_Sans','Noto_Sans_CJK_SC',sans-serif]">
    <div className="flex-1 min-h-0 flex flex-col border-t border-x border-[#e6e6fb]">
      <TitleBar />
      <TabRow />
      <Ribbon />
      <AddressBar />
      <div className="flex-1 min-h-0 flex">
        <Sidebar />
        <FolderGrid />
        <MainScrollbar />
      </div>
      <StatusBar />
    </div>
    <Taskbar />
    <Battery />
  </div>
);

export default App;
